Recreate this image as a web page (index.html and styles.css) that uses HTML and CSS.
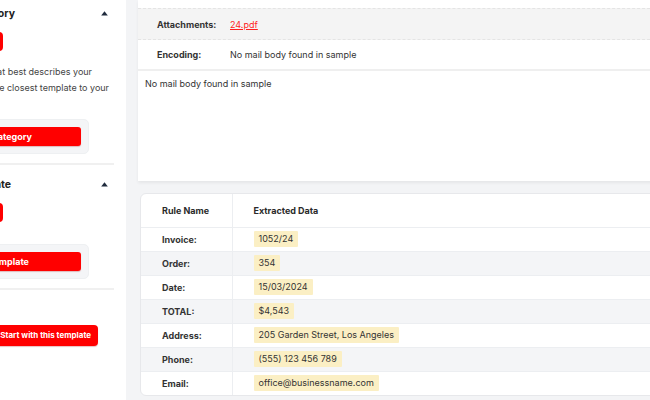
FILE: index.html
```html
<!DOCTYPE html>
<html lang="en">
<head>
<meta charset="utf-8">
<title>Parsed document</title>
<link rel="stylesheet" href="styles.css">
</head>
<body>
<div class="page">
  <aside class="sidebar">
    <section class="step">
      <div class="step-head">
        <span class="step-title">Select Category</span>
        <svg class="caret" width="7" height="5" viewBox="0 0 7 5"><path d="M3.5 0.3 L6.8 4.6 L0.2 4.6 Z" fill="#1f2b3d"/></svg>
      </div>
      <span class="badge" aria-label="Step 1"></span>
      <p class="desc">
        <span class="line l1">Choose a type that best describes your</span>
        <span class="line l2">file and pick the closest template to your</span>
      </p>
      <div class="picker">
        <button class="btn-red wide cat">Select Category</button>
      </div>
    </section>
    <hr class="divider">
    <section class="step">
      <div class="step-head">
        <span class="step-title tpl">Select Template</span>
        <svg class="caret" width="7" height="5" viewBox="0 0 7 5"><path d="M3.5 0.3 L6.8 4.6 L0.2 4.6 Z" fill="#1f2b3d"/></svg>
      </div>
      <span class="badge" aria-label="Step 2"></span>
      <div class="picker second">
        <button class="btn-red wide tplbtn">Select Template</button>
      </div>
    </section>
    <hr class="divider">
    <div class="start-row">
      <button class="btn-red start">Start with this template</button>
    </div>
  </aside>

  <main class="main">
    <div class="mail-card">
      <div class="meta-row attach">
        <span class="meta-label">Attachments:</span>
        <a class="meta-link" href="#">24.pdf</a>
      </div>
      <div class="meta-row encoding">
        <span class="meta-label">Encoding:</span>
        <span class="meta-value">No mail body found in sample</span>
      </div>
      <div class="mail-body">No mail body found in sample</div>
    </div>

    <div class="data-card">
      <table class="data-table">
        <thead>
          <tr><th class="rule">Rule Name</th><th>Extracted Data</th></tr>
        </thead>
        <tbody>
          <tr><td class="rule">Invoice:</td><td><span class="hl">1052/24</span></td></tr>
          <tr class="alt"><td class="rule">Order:</td><td><span class="hl">354</span></td></tr>
          <tr><td class="rule">Date:</td><td><span class="hl">15/03/2024</span></td></tr>
          <tr class="alt"><td class="rule">TOTAL:</td><td><span class="hl">$4,543</span></td></tr>
          <tr><td class="rule">Address:</td><td><span class="hl">205 Garden Street, Los Angeles</span></td></tr>
          <tr class="alt"><td class="rule">Phone:</td><td><span class="hl">(555) 123 456 789</span></td></tr>
          <tr><td class="rule">Email:</td><td><span class="hl">office@businessname.com</span></td></tr>
        </tbody>
      </table>
    </div>
  </main>
</div>
</body>
</html>
```

FILE: styles.css
```css
* { box-sizing: border-box; }

html, body {
  margin: 0;
  padding: 0;
  height: 400px;
  overflow: hidden;
}

body {
  background: #f3f4f6;
  font-family: Inter, "Noto Sans", "Liberation Sans", sans-serif;
  font-size: 9px;
  color: #333;
}

.page {
  display: flex;
  height: 400px;
  width: 680px;
}

/* ---------- sidebar ---------- */
.sidebar {
  flex: none;
  width: 233px;
  margin-left: -107px;
  background: #fff;
  padding: 0 12px 0 16px;
  height: 400px;
}

.step-head {
  display: flex;
  align-items: center;
  height: 26px;
}

.step-title {
  width: 106px;
  text-align: right;
  white-space: nowrap;
  font-weight: 700;
  font-size: 10.5px;
  color: #222;
}
.step-title.tpl { width: 102px; }

.caret {
  margin-left: auto;
  margin-right: 6px;
  display: block;
}

.badge {
  display: block;
  width: 94px;
  height: 19px;
  margin-top: 6px;
  border-radius: 4px;
  background: #ff0000;
}

.desc {
  margin: 13px 0 0;
  line-height: 16px;
  color: #444;
  font-size: 9px;
}
.desc .line {
  display: block;
  text-align: right;
  white-space: nowrap;
}
.desc .l1 { padding-right: 22px; }
.desc .l2 { padding-right: 5px; }

.picker {
  width: 180px;
  margin-top: 23px;
  padding: 7px;
  background: #f4f5f7;
  border: 1px solid #eef0f2;
  border-radius: 5px;
}
.picker.second { margin-top: 22px; }

.btn-red {
  display: block;
  border: 0;
  border-radius: 3px;
  background: #ff0000;
  color: #fff;
  font-family: inherit;
  font-weight: 700;
  font-size: 9px;
  height: 19px;
  line-height: 19px;
  padding: 0;
  white-space: nowrap;
  box-shadow: 0 1px 1px rgba(160, 0, 0, 0.25);
}
.btn-red.wide {
  width: 100%;
  text-align: right;
}
.btn-red.cat { padding-right: 49px; }
.btn-red.tplbtn { padding-right: 52px; }

.divider {
  border: 0;
  border-top: 2px solid #f0f0f0;
  margin: 9px 0 0;
  height: 0;
}
.divider + .step { margin-top: 6px; }

.start-row {
  display: flex;
  justify-content: flex-end;
  padding-right: 16px;
  margin-top: 35px;
}
.btn-red.start {
  height: 21px;
  line-height: 21px;
  padding: 0 7px;
  font-size: 8px;
  border-radius: 4px;
}

/* ---------- main ---------- */
.main {
  flex: 1;
  padding-left: 12px;
  display: flex;
  flex-direction: column;
}

.mail-card {
  height: 181px;
  background: #fff;
  padding-top: 8px;
  box-shadow: 0 2px 3px rgba(0, 0, 0, 0.06);
}

.meta-row {
  display: flex;
  align-items: center;
  padding-left: 19px;
}
.meta-row.attach {
  height: 32px;
  background: #f4f4f4;
  border-top: 1px dashed #e4e4e4;
  border-bottom: 1px dashed #e4e4e4;
}
.meta-row.encoding {
  height: 31px;
  border-bottom: 2px solid #efefef;
}

.meta-label {
  width: 73px;
  font-weight: 700;
  color: #333;
}
.meta-link {
  color: #ff1f1f;
  text-decoration: underline;
}
.meta-value { color: #333; }

.mail-body {
  padding: 6px 7px;
  line-height: 14px;
  color: #333;
}

.data-card {
  margin: 12px 0 0 2px;
  height: 203px;
  background: #fff;
  border: 1px solid #e7e8eb;
  border-radius: 6px;
  overflow: hidden;
}

.data-table {
  width: 100%;
  border-collapse: collapse;
}
.data-table th,
.data-table td {
  text-align: left;
  padding: 0 0 0 21px;
  border-bottom: 1px solid #eceef1;
  color: #333;
  white-space: nowrap;
}
.data-table th {
  height: 33px;
  font-weight: 700;
  color: #2a2a2a;
}
.data-table td { height: 24px; }
.data-table .rule {
  width: 91px;
  border-right: 1px solid #eceef1;
  font-weight: 700;
}
.data-table tr.alt td { background: #f4f5f7; }
.data-table tbody tr:last-child td { border-bottom: 0; }

.hl {
  display: inline-block;
  background: #fbefc4;
  padding: 0 5px;
  line-height: 16px;
  border-radius: 1px;
  color: #333;
}
```
